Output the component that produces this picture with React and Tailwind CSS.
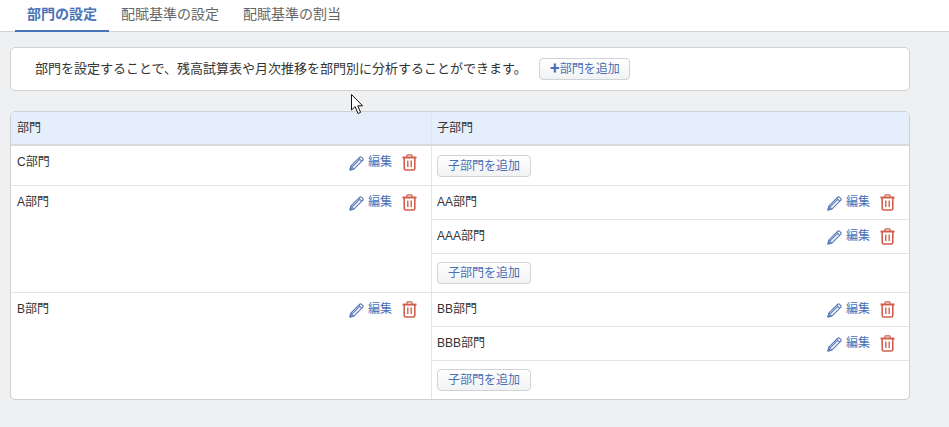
const FONT = "font-['Liberation_Sans','Noto_Sans_CJK_JP',sans-serif]";

function Pencil() {
  return (
    <svg width="15" height="15" viewBox="0 0 15 15" fill="none" stroke="#5a7ab8" strokeWidth="1.2" strokeLinejoin="round">
      <path d="M1 14 L1.8 10.2 L10.8 1.2 Q11.6 .6 12.4 1.2 L13.8 2.6 Q14.4 3.4 13.8 4.2 L4.8 13.2 Z" />
      <path d="M1.8 10.2 L4.8 13.2 M9.8 2.4 L12.6 5.2 M3.4 10.6 L11.2 2.8" />
      <path d="M1 14 L1.5 11.8 L3.2 13.5 Z" fill="#4a6fb5" />
    </svg>
  );
}

function Trash() {
  return (
    <svg width="15" height="17" viewBox="0 0 15 17" fill="none" stroke="#d0604c" strokeWidth="1.6">
      <path d="M.5 3.6 H14.5" strokeWidth="2" />
      <path d="M5 3 V1.6 Q5 .8 5.8 .8 H9.2 Q10 .8 10 1.6 V3" strokeWidth="1.2" />
      <path d="M2.2 3.6 V14.4 Q2.2 16 3.8 16 H11.2 Q12.8 16 12.8 14.4 V3.6" />
      <path d="M5.8 6.6 V13 M9.2 6.6 V13" strokeWidth="1.4" />
    </svg>
  );
}

function Actions() {
  return (
    <div className="mt-px flex items-center">
      <Pencil />
      <span className="ml-1 w-6 pb-[2px] text-xs text-[#4a6fb5]">編集</span>
      <span className="-mt-[2px] ml-[10px] block"><Trash /></span>
    </div>
  );
}

function Button({ children }) {
  return (
    <button className="flex h-[22px] items-center rounded-[4px] border border-[#cfd2d6] bg-gradient-to-b from-white to-[#f1f2f4] px-[10px] text-xs text-[#4a6fb5]">
      {children}
    </button>
  );
}

function ChildRow({ name }) {
  return (
    <div className="flex h-[34px] items-start justify-between border-b border-[#e3e4e6] pl-[5px] pr-[14px] pt-[7px]">
      <span className="mt-px text-xs leading-4">{name}</span>
      <Actions />
    </div>
  );
}

function Row({ name, kids, last, first }) {
  return (
    <div className={`flex ${last ? "" : "border-b border-[#e3e4e6]"}`}>
      <div className="flex w-[421px] shrink-0 items-start justify-between border-r border-[#e3e4e6] pl-[6px] pr-[14px] pt-[7px]">
        <span className="mt-px text-xs leading-4">{name}</span>
        <Actions />
      </div>
      <div className="flex-1">
        {kids.map((k) => <ChildRow key={k} name={k} />)}
        <div className={first ? "h-[39px] pl-[5px] pt-[9px]" : "h-[38px] pl-[5px] pt-2"}><Button>子部門を追加</Button></div>
      </div>
    </div>
  );
}

export default function App() {
  return (
    <div className={`relative h-[427px] w-[949px] overflow-hidden bg-[#eff0f2] text-[#333] ${FONT}`}>
      <div className="flex h-8 border-b border-[#d3d4d6] bg-white pl-[15px]">
        <div className="h-8 w-[94px] border-b-2 border-[#4a74b8] text-center text-sm font-bold leading-[28px] text-[#4a74b8]">部門の設定</div>
        <div className="ml-3 h-8 text-sm leading-[28px] text-[#666]">配賦基準の設定</div>
        <div className="ml-6 h-8 text-sm leading-[28px] text-[#666]">配賦基準の割当</div>
      </div>
      <div className="ml-[10px] mt-[15px] flex h-11 w-[900px] items-center rounded-[5px] border border-[#cfd0d2] bg-white pl-6">
        <span className="text-[13px]">部門を設定することで、残高試算表や月次推移を部門別に分析することができます。</span>
        <span className="ml-3"><Button><b className="text-[10px] font-bold leading-none">✚</b><span className="-mr-px">部門を追加</span></Button></span>
      </div>
      <div className="ml-[10px] mt-5 w-[900px] overflow-hidden rounded-[5px] border border-[#cfd0d2] bg-white">
        <div className="flex h-[34px] border-b-2 border-[#d9dadc] bg-[#e4effb] text-xs leading-[32px]">
          <div className="w-[421px] border-r border-[#e3e4e6] pl-[6px]">部門</div>
          <div className="pl-[5px]">子部門</div>
        </div>
        <Row name="C部門" kids={[]} first />
        <Row name="A部門" kids={["AA部門", "AAA部門"]} />
        <Row name="B部門" kids={["BB部門", "BBB部門"]} last />
      </div>
      <svg className="absolute left-[351px] top-[94px]" width="13" height="21" viewBox="0 0 13 21">
        <path d="M.5 .5 V16 L4.2 12.6 L7 19.5 L9.6 18.4 L6.8 11.8 H11.6 Z" fill="#fff" stroke="#111" strokeWidth="1" />
      </svg>
    </div>
  );
}
